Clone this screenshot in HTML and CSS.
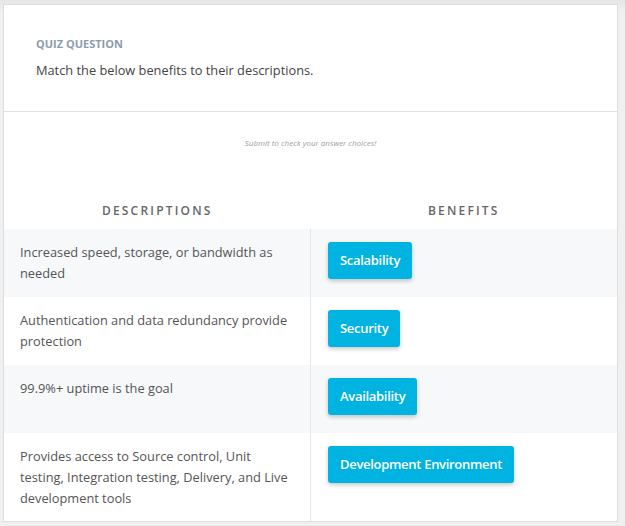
FILE: index.html
```html
<!DOCTYPE html>
<html lang="en">
<head>
<meta charset="utf-8">
<title>Quiz Question</title>
<link rel="stylesheet" href="styles.css">
</head>
<body>
<div class="card">
  <div class="question">
    <div class="label">QUIZ QUESTION</div>
    <div class="prompt">Match the below benefits to their descriptions.</div>
  </div>
  <div class="answers">
    <div class="hint">Submit to check your answer choices!</div>
    <table class="match">
      <thead>
        <tr><th>DESCRIPTIONS</th><th>BENEFITS</th></tr>
      </thead>
      <tbody>
        <tr class="alt">
          <td class="desc">Increased speed, storage, or bandwidth as needed</td>
          <td class="benefit"><span class="chip">Scalability</span></td>
        </tr>
        <tr>
          <td class="desc">Authentication and data redundancy provide protection</td>
          <td class="benefit"><span class="chip">Security</span></td>
        </tr>
        <tr class="alt">
          <td class="desc">99.9%+ uptime is the goal</td>
          <td class="benefit"><span class="chip">Availability</span></td>
        </tr>
        <tr>
          <td class="desc">Provides access to Source control, Unit testing, Integration testing, Delivery, and Live development tools</td>
          <td class="benefit"><span class="chip">Development Environment</span></td>
        </tr>
      </tbody>
    </table>
  </div>
</div>
</body>
</html>
```

FILE: styles.css
```css
html, body {
  margin: 0;
  padding: 0;
}
body {
  background: linear-gradient(#e6e6e6, #f0f0f0 12px, #f0f0f0);
  font-family: "Open Sans", "Liberation Sans", sans-serif;
  height: 526px;
  overflow: hidden;
}
.card {
  margin: 4px 0 0 3px;
  width: 613px;
  background: #fff;
  border: 1px solid #dedede;
}
.question {
  padding: 31px 32px 31px;
  border-bottom: 1px solid #dfe1e4;
}
.label {
  font-size: 11px;
  font-weight: 700;
  color: #8c9bab;
  line-height: 16px;
}
.prompt {
  margin-top: 8px;
  font-size: 12.8px;
  color: #444;
  line-height: 20px;
}
.answers {
  padding-top: 26px;
}
.hint {
  text-align: center;
  font-size: 8px;
  font-style: italic;
  color: #a0a0a0;
  line-height: 10px;
}
.match {
  margin-top: 45px;
  width: 100%;
  border-collapse: collapse;
  table-layout: fixed;
}
.match th {
  font-size: 12px;
  font-weight: 600;
  letter-spacing: 2.2px;
  color: #666;
  padding: 10px 0;
  line-height: 16px;
}
.match td + td {
  border-left: 1px solid #e4e6e9;
}
.match tr.alt td {
  background: #f6f8fa;
}
.desc {
  padding: 13px 16px;
  font-size: 12.8px;
  line-height: 20.8px;
  color: #555;
  vertical-align: top;
}
.benefit {
  padding: 13px 17px;
  vertical-align: top;
}
.chip {
  display: inline-block;
  height: 37px;
  line-height: 37px;
  padding: 0 12px;
  margin-bottom: 5px;
  background: #00b3e0;
  color: #fff;
  font-size: 13px;
  font-weight: 600;
  letter-spacing: -0.3px;
  border-radius: 3px;
  box-shadow: 0 2px 4px rgba(0, 0, 0, 0.22);
  vertical-align: top;
}
```
